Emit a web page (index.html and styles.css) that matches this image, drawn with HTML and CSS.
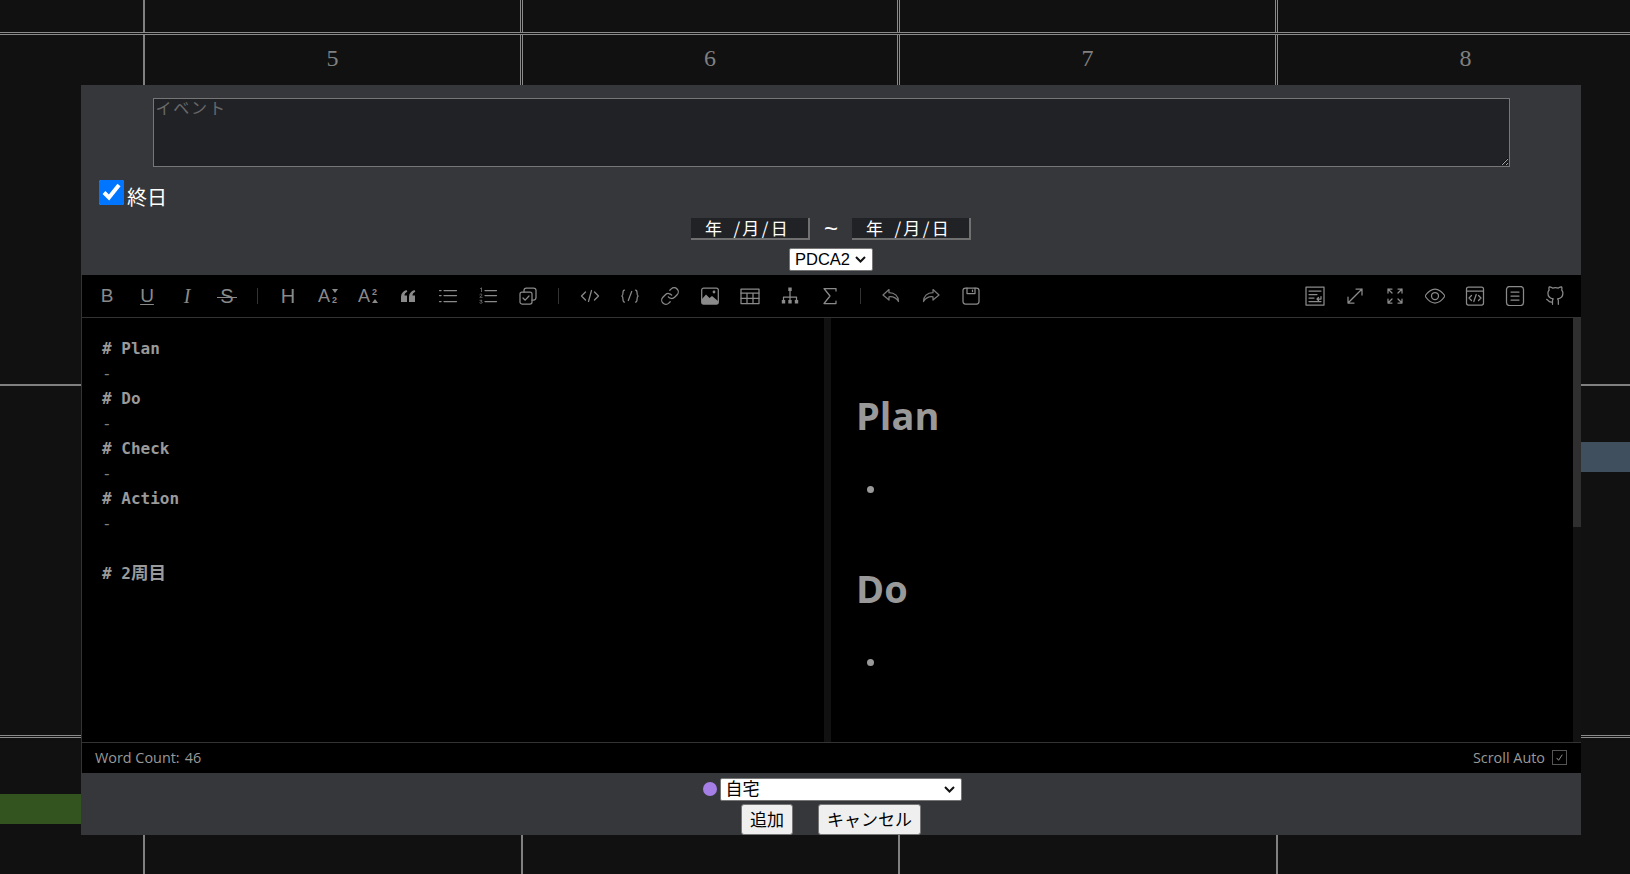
FILE: index.html
```html
<!DOCTYPE html>
<html lang="ja">
<head>
    <meta charset="UTF-8">
    <meta name="viewport" content="width=device-width, initial-scale=1.0">
    <title>カレンダー</title>
    <link rel="stylesheet" href="styles.css">
</head>
<body>
    <!-- calendar behind the modal -->
    <div class="calendar">
        <div class="week week-top">
            <div class="gutter"></div><div class="day"></div><div class="day"></div><div class="day"></div><div class="day"></div>
        </div>
        <div class="week week-main">
            <div class="gutter"></div>
            <div class="day"><span class="day-num">5</span></div>
            <div class="day"><span class="day-num">6</span></div>
            <div class="day"><span class="day-num">7</span></div>
            <div class="day"><span class="day-num">8</span></div>
        </div>
        <div class="week week-mid">
            <div class="gutter"></div><div class="day"></div><div class="day"></div><div class="day"></div>
            <div class="day"><div class="event event-blue"></div></div>
        </div>
        <div class="week week-last">
            <div class="gutter"><div class="event event-green"></div></div><div class="day"></div><div class="day"></div><div class="day"></div><div class="day"></div>
        </div>
    </div>

    <div class="modal">
        <textarea class="title-input" placeholder="イベント"></textarea>
        <label class="allday"><input type="checkbox" checked><span>終日</span></label>
        <div class="date-row">
            <span class="date-input">年 /月/日</span>
            <span class="tilde">~</span>
            <span class="date-input">年 /月/日</span>
        </div>
        <select class="template-select"><option>PDCA2</option></select>

        <div class="editor">
            <div class="toolbar">
                <button class="tool txt"><b>B</b></button>
                <button class="tool txt"><u>U</u></button>
                <button class="tool txt"><i>I</i></button>
                <button class="tool txt"><s>S</s></button>
                <span class="sep"></span>
                <button class="tool txt txt-h">H</button>
                <button class="tool txt txt-a">A<span class="mini"><span class="tri tri-down"></span><span>2</span></span></button>
                <button class="tool txt txt-a">A<span class="mini"><span>2</span><span class="tri tri-up"></span></span></button>
                <button class="tool"><svg class="ic" viewBox="0 0 20 20"><path class="fill" d="M8.500 4C5 5.200 3 7.500 3 11v5h6v-6.500H6.500C6.500 7.800 7.500 6.800 9.300 5.800zM16.500 4C13 5.200 11 7.500 11 11v5h6v-6.500h-2.500c0-1.700 1-2.700 2.800-3.700z"/></svg></button>
                <button class="tool"><svg class="ic" viewBox="0 0 20 20"><path d="M6 4.500h12.500M6 9.500h12.500M6 15.500h12.500M1.500 4.500h1.600M1.500 9.500h1.600M1.500 15.500h1.600"/></svg></button>
                <button class="tool"><svg class="ic" viewBox="0 0 20 20"><path d="M7 4.500h11.500M7 9.500h11.500M7 15.500h11.500"/><path class="thin" d="M2.500 2.500l1-.7v3.800M1.800 8.500c.5-.8 2.400-.6 2.200.5-.1.700-1.700 1.500-2.200 2.300h2.400M1.900 14.300h2.100l-1.100 1.200c1 0 1.400.4 1.300 1-.1.900-1.700 1-2.400.4"/></svg></button>
                <button class="tool"><svg class="ic" viewBox="0 0 20 20"><rect x="2" y="6" width="12" height="12" rx="2"/><path d="M6 6V4.500C6 3 7 2 8.300 2h7.200C17 2 18 3 18 4.300v7.200c0 1.400-1 2.500-2.500 2.500H14"/><path d="M5 12l2.200 2.200L11 10"/></svg></button>
                <span class="sep sep-wide"></span>
                <button class="tool"><svg class="ic" viewBox="0 0 20 20"><path d="M5.500 6L1.500 10l4 4M14.500 6l4 4-4 4M11.500 4.500l-3 11"/></svg></button>
                <button class="tool"><svg class="ic" viewBox="0 0 20 20"><path d="M4.500 4C3 4 3 5 3 6.500S3 9.500 1.800 10C3 10.500 3 12 3 13.500S3 16 4.500 16M15.500 4C17 4 17 5 17 6.500s0 3 1.200 3.500C17 10.500 17 12 17 13.500S17 16 15.500 16M11.700 5.500l-3.400 9"/></svg></button>
                <button class="tool"><svg class="ic ic-24" viewBox="0 0 24 24"><path d="M10 13a5 5 0 0 0 7.540.540l3-3a5 5 0 0 0-7.070-7.070l-1.720 1.710"/><path d="M14 11a5 5 0 0 0-7.540-.540l-3 3a5 5 0 0 0 7.070 7.070l1.710-1.710"/></svg></button>
                <button class="tool"><svg class="ic" viewBox="0 0 20 20"><rect x="1.700" y="2" width="16.600" height="16" rx="2"/><path class="fill" d="M2 13l4-4.500 3.500 3.500 2.500-2 6 5v1.500c0 1-.7 1.500-2 1.500H4c-1.300 0-2-.5-2-1.500z"/><circle class="fill" cx="14" cy="6" r="1.400"/></svg></button>
                <button class="tool"><svg class="ic" viewBox="0 0 20 20"><rect x="1" y="3" width="18" height="14.500"/><path d="M1 7h18M1 12.300h18M7 7v10.500M13 7v10.500"/></svg></button>
                <button class="tool"><svg class="ic" viewBox="0 0 20 20"><path d="M10 4v10M3.500 14v-3h13v3"/><path class="fill" d="M8.300 1.500h3.400v3.400H8.300zM1.800 14h3.400v3.400H1.800zM8.300 14h3.400v3.400H8.300zM14.800 14h3.400v3.400h-3.400z"/></svg></button>
                <button class="tool"><svg class="ic" viewBox="0 0 20 20"><path d="M16 5V2.500H4L10 10l-6 7.500h12V15"/></svg></button>
                <span class="sep"></span>
                <button class="tool"><svg class="ic ic-dim" viewBox="0 0 20 20"><path d="M8 3.500L2 9l6 5v-3.200c4-.5 7 .8 9.500 4.700 0-5.300-3.500-8.800-9.500-8.800z"/></svg></button>
                <button class="tool"><svg class="ic ic-dim" viewBox="0 0 20 20"><path d="M12 3.500L18 9l-6 5v-3.200c-4-.5-7 .8-9.500 4.700 0-5.300 3.500-8.800 9.500-8.800z"/></svg></button>
                <button class="tool"><svg class="ic" viewBox="0 0 20 20"><rect x="2" y="2" width="16" height="16" rx="2.500"/><path d="M6 2v5.500h8V2"/><path d="M11.500 4v1.500"/></svg></button>

                <div class="toolbar-right">
                    <button class="tool"><svg class="ic" viewBox="0 0 20 20"><rect x="1" y="1" width="18" height="18"/><path d="M4 5h12M4 8.500h8M4 12h5M4 15.500h12M16 10.500V13h-4M13.500 11.500L12 13l1.500 1.500"/></svg></button>
                    <button class="tool"><svg class="ic" viewBox="0 0 20 20"><path d="M3 17L17 3M11 3h6v6M3 11v6h6"/></svg></button>
                    <button class="tool"><svg class="ic" viewBox="0 0 20 20"><path d="M3 7V3h4M3 3l4 4M13 3h4v4M17 3l-4 4M17 13v4h-4M17 17l-4-4M7 17H3v-4M3 17l4-4"/></svg></button>
                    <button class="tool"><svg class="ic" viewBox="0 0 20 20"><path d="M0 10c3-4.500 6.500-7 10-7s7 2.500 10 7c-3 4.500-6.500 7-10 7S3 14.500 0 10z"/><circle cx="10" cy="10" r="3.500"/></svg></button>
                    <button class="tool"><svg class="ic" viewBox="0 0 20 20"><rect x="1.500" y="1" width="17" height="18" rx="2"/><path d="M1.500 5h17M6.500 9.500L4 12l2.500 2.500M13.500 9.500L16 12l-2.500 2.500M11.200 8.500l-2.400 7"/></svg></button>
                    <button class="tool"><svg class="ic" viewBox="0 0 20 20"><rect x="1.500" y="0.500" width="17" height="19" rx="3"/><path d="M6 6h8M6 10h8M6 14h8"/></svg></button>
                    <button class="tool"><svg class="ic ic-24" viewBox="0 0 24 24"><path d="M9 19c-5 1.500-5-2.500-7-3m14 6v-3.870a3.370 3.370 0 0 0-.940-2.610c3.140-.350 6.440-1.540 6.440-7A5.440 5.440 0 0 0 20 4.770 5.070 5.070 0 0 0 19.910 1S18.730.650 16 2.480a13.380 13.380 0 0 0-7 0C6.270.650 5.090 1 5.090 1A5.070 5.070 0 0 0 5 4.770a5.440 5.440 0 0 0-1.500 3.750c0 5.420 3.300 6.610 6.440 7A3.370 3.370 0 0 0 9 18.130V22"/></svg></button>
                </div>
            </div>

            <div class="panes">
                <pre class="source"><b># Plan</b>
-
<b># Do</b>
-
<b># Check</b>
-
<b># Action</b>
-

<b># 2<span class="cjk">周目</span></b></pre>
                <div class="divider"></div>
                <div class="preview">
                    <h1>Plan</h1>
                    <ul><li>&nbsp;</li></ul>
                    <h1>Do</h1>
                    <ul><li>&nbsp;</li></ul>
                </div>
                <div class="scrollbar"><div class="thumb"></div></div>
            </div>

            <div class="status">
                <span>Word Count:<span class="count">46</span></span>
                <span class="scroll-auto">Scroll Auto<span class="mini-check"><svg viewBox="0 0 14 14"><path d="M4 7.500l2 2.500 4-6"/></svg></span></span>
            </div>
        </div>

        <div class="place-row">
            <span class="place-dot"></span>
            <select class="place-select"><option>自宅</option></select>
        </div>
        <div class="button-row">
            <button class="btn">追加</button>
            <button class="btn">キャンセル</button>
        </div>
    </div>
</body>
</html>
```

FILE: styles.css
```css
/* Global Styles */
* {
    box-sizing: border-box;
}
html, body {
    height: 100%;
}
body {
    margin: 0;
    overflow: hidden;
    background: #111112;
    font-family: 'Liberation Sans', 'Noto Sans CJK JP', sans-serif;
}

/* Calendar */
.calendar {
    height: 874px;
    overflow: hidden;
}
.week {
    display: grid;
    grid-template-columns: 145px 378px 377px 378px 375px;
}
.week-top {
    height: 35px;
    border-bottom: 3px double #8a8a8a;
}
.week-main {
    height: 351px;
    border-bottom: 2px solid #808080;
}
.week-mid {
    height: 352px;
    border-bottom: 3px double #8a8a8a;
}
.week-last {
    height: 136px;
}
.gutter {
    border-right: 2px solid #808080;
}
.day {
    border-right: 3px double #8a8a8a;
    text-align: center;
}
.week-last .day {
    border-right: 2px solid #808080;
}
.day:last-child,
.week-last .day:last-child {
    border-right: none;
}
.day-num {
    display: block;
    margin-top: 9px;
    font: 24px/28px 'Liberation Serif', serif;
    color: #808080;
}
.event {
    height: 30px;
    margin-top: 56px;
}
.event-blue {
    background: #3f4f5e;
}
.event-green {
    background: #33531f;
}

/* Modal */
.modal {
    position: fixed;
    left: 81px;
    top: 85px;
    width: 1500px;
    padding-top: 13px;
    background: #36373b;
    display: flex;
    flex-direction: column;
    align-items: center;
    color: #fff;
}
.title-input {
    display: block;
    width: 1357px;
    height: 69px;
    padding: 0 2px;
    background: #212226;
    border: 1px solid #767676;
    color: #fff;
    font: 16px/16px 'Noto Sans CJK JP', sans-serif;
    letter-spacing: 1.8px;
}
.title-input::placeholder {
    color: #696969;
}
.allday {
    align-self: flex-start;
    display: flex;
    align-items: flex-start;
    height: 28px;
    margin: 13px 0 10px 18px;
    font: 20px/34px 'Noto Sans CJK JP', sans-serif;
}
.allday input {
    width: 25px;
    height: 25px;
    margin: 0 3px 0 0;
    accent-color: #0075ff;
}
.allday span {
    line-height: 34px;
}
.date-row {
    display: flex;
    align-items: center;
    height: 22px;
}
.date-input {
    width: 119px;
    height: 22px;
    padding-left: 14px;
    background: #212226;
    border-right: 2px solid #707070;
    border-bottom: 2px solid #707070;
    font: 17px/19px 'Noto Sans CJK JP', sans-serif;
    letter-spacing: 2.300px;
    word-spacing: 3px;
    white-space: pre;
}
.tilde {
    width: 42px;
    text-align: center;
    font: 24px/22px 'Liberation Sans', sans-serif;
}
.template-select,
.place-select {
    appearance: none;
    border: 1px solid #767676;
    border-radius: 2px;
    background: #fff url("data:image/svg+xml,%3Csvg xmlns='http://www.w3.org/2000/svg' width='11' height='7'%3E%3Cpath d='M1 1l4.500 4.500L10 1' fill='none' stroke='%23111' stroke-width='2'/%3E%3C/svg%3E") no-repeat right 6px center;
    color: #000;
}
.template-select {
    margin-top: 8px;
    width: 84px;
    height: 23px;
    padding: 0 0 0 5px;
    font: 16.500px/21px 'Liberation Sans', sans-serif;
}

/* Editor */
.editor {
    margin-top: 4px;
    width: 1500px;
    height: 498px;
    background: #000;
    border-left: 1px solid #333;
    display: flex;
    flex-direction: column;
}
.toolbar {
    flex: none;
    height: 43px;
    display: flex;
    align-items: center;
    padding-left: 5px;
    border-bottom: 1px solid #333;
}
.toolbar-right {
    margin-left: auto;
    display: flex;
    padding-right: 6px;
}
.tool {
    width: 40px;
    height: 42px;
    padding: 0;
    border: none;
    background: none;
    display: flex;
    align-items: center;
    justify-content: center;
    color: #8a8a8a;
    cursor: pointer;
}
.ic {
    width: 20px;
    height: 20px;
    fill: none;
    stroke: #8a8a8a;
    stroke-width: 1.250;
    stroke-linecap: round;
    stroke-linejoin: round;
}
.ic-24 {
    stroke-width: 1.500;
}
.ic-dim {
    stroke: #787878;
}
.ic .fill {
    fill: #8a8a8a;
    stroke: none;
}
.ic .thin {
    stroke-width: .7;
}
.txt {
    font: 19px 'Liberation Sans', sans-serif;
}
.txt b {
    font-weight: normal;
}
.txt u {
    text-underline-offset: 2px;
}
.txt i {
    font: italic 20px 'Liberation Serif', serif;
}
.txt s {
    position: relative;
    font-size: 20px;
    text-decoration: none;
}
.txt s::after {
    content: '';
    position: absolute;
    left: -3px;
    right: -3px;
    top: 12px;
    border-top: 1px solid #8a8a8a;
}
.txt-h {
    font-size: 20px;
}
.txt-a {
    font-size: 18px;
}
.mini {
    display: inline-flex;
    flex-direction: column;
    align-items: center;
    justify-content: space-between;
    width: 7px;
    height: 16px;
    margin-left: 1px;
    font-size: 9px;
    line-height: 8px;
    font-weight: bold;
}
.tri {
    width: 0;
    height: 0;
    margin: 1px 0;
    border-left: 3px solid transparent;
    border-right: 3px solid transparent;
}
.tri-down {
    border-top: 4px solid #8a8a8a;
}
.tri-up {
    border-bottom: 4px solid #8a8a8a;
}
.sep {
    width: 1px;
    height: 16px;
    margin: 0 10px;
    background: #333;
}
.sep-wide {
    margin-right: 11px;
}

.panes {
    flex: 1;
    min-height: 0;
    display: flex;
    overflow: hidden;
}
.source {
    flex: none;
    width: 742px;
    margin: 0;
    padding: 18px 20px;
    font: 16px/25px 'DejaVu Sans Mono', 'Noto Sans CJK JP', monospace;
    color: #7d7d7d;
}
.source b {
    color: #9a9a9a;
}
.source .cjk {
    font-size: 17.500px;
    line-height: 1;
}
.divider {
    flex: none;
    width: 7px;
    background: #111;
}
.preview {
    flex: 1;
    padding: 70px 25px 0;
    color: #999;
    overflow: hidden;
}
.preview h1 {
    margin: 0 0 33px;
    font: bold 38px/54px 'Open Sans', sans-serif;
}
.preview ul {
    margin: 0 0 60px;
    padding-left: 32px;
    font-size: 24px;
    line-height: 26px;
}
.scrollbar {
    flex: none;
    width: 8px;
    background: #121212;
}
.thumb {
    height: 209px;
    background: #2f2f2f;
}

.status {
    flex: none;
    height: 31px;
    display: flex;
    align-items: center;
    justify-content: space-between;
    padding: 0 14px 2px 13px;
    border-top: 1px solid #333;
    font: 14.400px 'Open Sans', sans-serif;
    color: #999;
}
.count {
    margin-left: 5px;
}
.scroll-auto {
    display: flex;
    align-items: center;
}
.mini-check {
    width: 15px;
    height: 15px;
    margin-left: 7px;
    border: 1px solid #555;
    display: flex;
}
.mini-check svg {
    fill: none;
    stroke: #999;
    stroke-width: 1;
}

/* Bottom controls */
.place-row {
    margin-top: 5px;
    height: 23px;
    display: flex;
    align-items: center;
    gap: 3px;
    padding-left: 2px;
}
.place-dot {
    width: 14px;
    height: 14px;
    margin-bottom: 1px;
    border-radius: 50%;
    background: #a67fe6;
}
.place-select {
    width: 242px;
    height: 23px;
    padding: 0 0 0 5px;
    font: 17px/21px 'Liberation Sans', 'Noto Sans CJK JP', sans-serif;
}
.button-row {
    margin-top: 3px;
    display: flex;
    gap: 25px;
}
.btn {
    height: 31px;
    padding: 0 8px 2px;
    font: 17px 'Noto Sans CJK JP', sans-serif;
    color: #000;
    background: #efefef;
    border: 1px solid #767676;
    border-radius: 3px;
}
```
